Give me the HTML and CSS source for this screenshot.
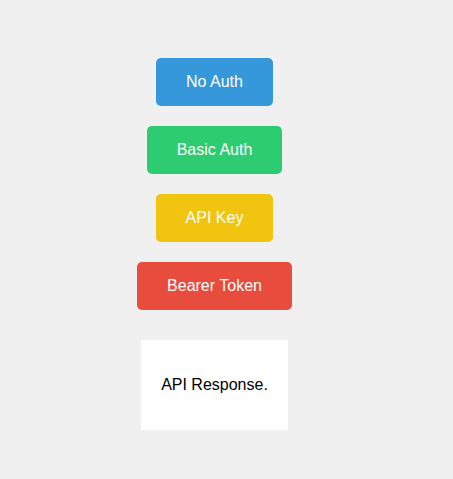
FILE: index.html
```html
<!DOCTYPE html>
<html>
<head>
<meta charset="utf-8">
<link rel="stylesheet" href="styles.css">
</head>
<body>
<div class="page">
  <button class="btn blue">No Auth</button>
  <button class="btn green">Basic Auth</button>
  <button class="btn yellow">API Key</button>
  <button class="btn red">Bearer Token</button>
  <div class="response">API Response.</div>
</div>
</body>
</html>
```
FILE: styles.css
```css
html, body {
  margin: 0;
  padding: 0;
  background: #f0f0f0;
  font-family: "Liberation Sans", Arial, sans-serif;
}
.page {
  width: 429px;
  padding-top: 58px;
  display: flex;
  flex-direction: column;
  align-items: center;
  gap: 20px;
}
.btn {
  font-family: "Liberation Sans", Arial, sans-serif;
  font-size: 16px;
  line-height: 18px;
  color: #fff;
  border: none;
  border-radius: 5px;
  padding: 15px 30px;
  height: 48px;
  cursor: pointer;
}
.blue { background: #3498db; }
.green { background: #2ecc71; }
.yellow { background: #f1c40f; }
.red { background: #e74c3c; }
.response {
  margin-top: 10px;
  background: #fff;
  color: #000;
  font-size: 16px;
  line-height: 18px;
  padding: 36px 20px;
  width: 147px;
  box-sizing: border-box;
  text-align: center;
}
```
